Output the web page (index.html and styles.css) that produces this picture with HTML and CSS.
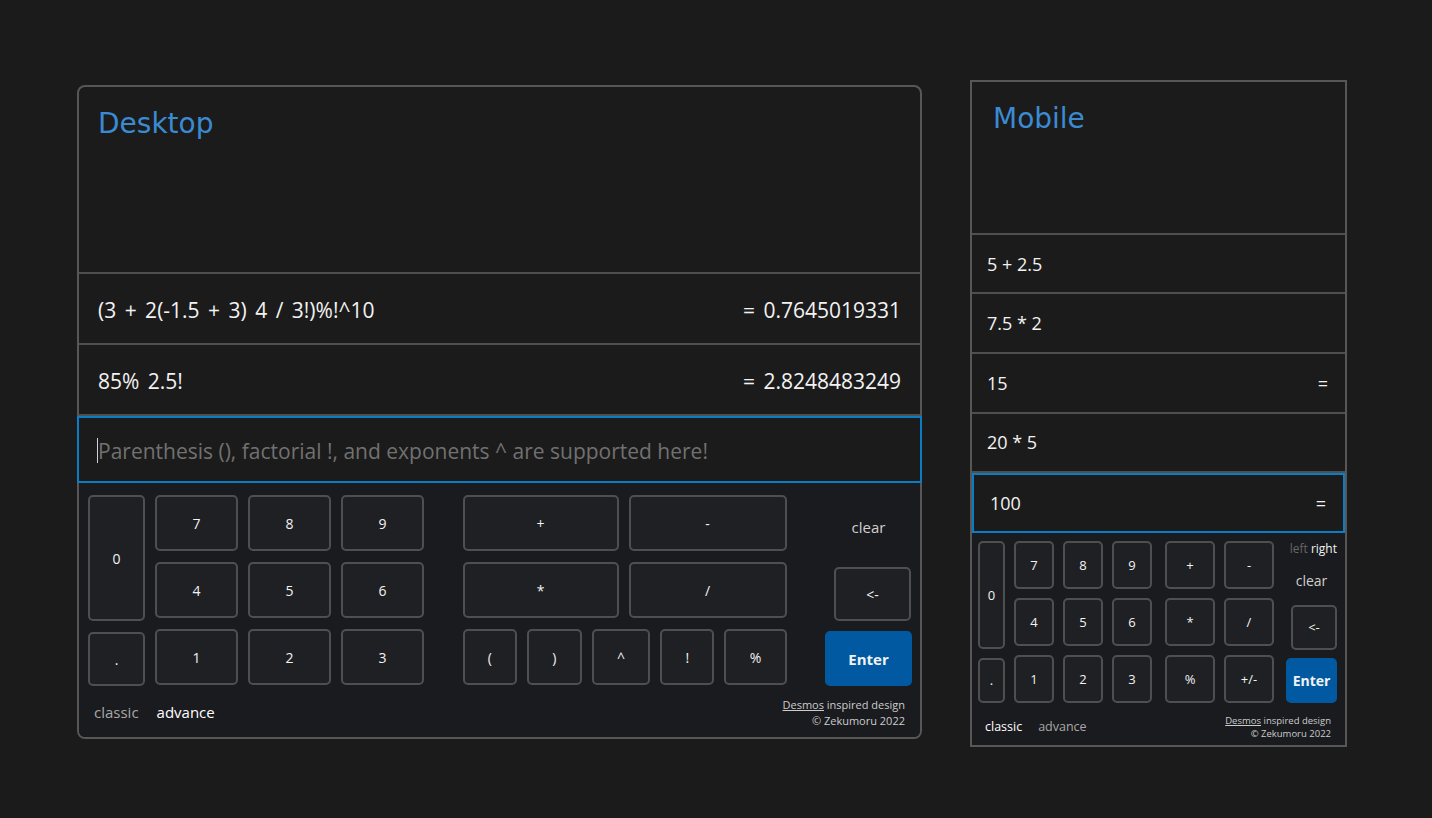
FILE: index.html
```html
<!DOCTYPE html>
<html lang="en">
<head>
<meta charset="utf-8">
<title>Calculator</title>
<link rel="stylesheet" href="styles.css">
</head>
<body>
<div class="stage">
  <section class="calc desktop">
    <header class="calc-head"><h1 class="title">Desktop</h1></header>
    <div class="row"><span>(3 + 2(-1.5 + 3) 4 / 3!)%!^10</span><span>= 0.7645019331</span></div>
    <div class="row"><span>85% 2.5!</span><span>= 2.8248483249</span></div>
    <div class="input"><span class="caret"></span><span class="placeholder">Parenthesis (), factorial !, and exponents ^ are supported here!</span></div>
    <div class="keypad">
      <div class="keys">
        <div class="numpad">
          <div class="leftcol">
            <button class="key zero">0</button>
            <button class="key dot">.</button>
          </div>
          <div class="numgrid">
            <button class="key">7</button><button class="key">8</button><button class="key">9</button>
            <button class="key">4</button><button class="key">5</button><button class="key">6</button>
            <button class="key">1</button><button class="key">2</button><button class="key">3</button>
          </div>
        </div>
        <div class="ops">
          <div class="opgrid">
            <button class="key op">+</button><button class="key op">-</button>
            <button class="key op">*</button><button class="key op">/</button>
          </div>
          <div class="oprow">
            <button class="key op">(</button><button class="key op">)</button><button class="key op">^</button><button class="key op">!</button><button class="key op">%</button>
          </div>
        </div>
        <div class="side">
          <div class="clear">clear</div>
          <button class="key back">&lt;-</button>
          <button class="key enter">Enter</button>
        </div>
      </div>
      <div class="foot">
        <div class="modes"><span class="mode">classic</span><span class="mode active">advance</span></div>
        <div class="credit"><div><a href="#">Desmos</a> inspired design</div><div>© Zekumoru 2022</div></div>
      </div>
    </div>
  </section>

  <section class="calc mobile">
    <header class="calc-head"><h1 class="title">Mobile</h1></header>
    <div class="row"><span>5 + 2.5</span></div>
    <div class="row"><span>7.5 * 2</span></div>
    <div class="row"><span>15</span><span>=</span></div>
    <div class="row"><span>20 * 5</span></div>
    <div class="input"><span class="value">100</span><span>=</span></div>
    <div class="keypad">
      <div class="keys">
        <div class="numpad">
          <div class="leftcol">
            <button class="key zero">0</button>
            <button class="key dot">.</button>
          </div>
          <div class="numgrid">
            <button class="key">7</button><button class="key">8</button><button class="key">9</button>
            <button class="key">4</button><button class="key">5</button><button class="key">6</button>
            <button class="key">1</button><button class="key">2</button><button class="key">3</button>
          </div>
        </div>
        <div class="opgrid">
          <button class="key op">+</button><button class="key op">-</button>
          <button class="key op">*</button><button class="key op">/</button>
          <button class="key op">%</button><button class="key op">+/-</button>
        </div>
        <div class="side">
          <div class="hand"><span class="dim">left</span> <span>right</span></div>
          <div class="clear">clear</div>
          <button class="key back">&lt;-</button>
          <button class="key enter">Enter</button>
        </div>
      </div>
      <div class="foot">
        <div class="modes"><span class="mode active">classic</span><span class="mode">advance</span></div>
        <div class="credit"><div><a href="#">Desmos</a> inspired design</div><div>© Zekumoru 2022</div></div>
      </div>
    </div>
  </section>
</div>
</body>
</html>
```

FILE: styles.css
```css
* { box-sizing: border-box; }
html, body { margin: 0; padding: 0; background: #1b1b1b; }
body {
  font-family: "Open Sans", "Noto Sans", sans-serif;
  color: #f2f2f2;
}
.stage {
  height: 818px;
  padding-left: 77px;
  display: flex;
  align-items: flex-start;
  gap: 48px;
}
.calc {
  background: #1b1b1b;
  border: 2px solid #575757;
  display: flex;
  flex-direction: column;
  flex: none;
}
.calc-head { border-bottom: 2px solid #4f4f4f; }
.title {
  margin: 0;
  font-family: "DejaVu Sans", Verdana, sans-serif;
  font-weight: normal;
  color: #3a8bd3;
  font-size: 28px;
  line-height: 1;
}
.row {
  display: flex;
  justify-content: space-between;
  align-items: center;
  border-bottom: 2px solid #4f4f4f;
}
.input {
  display: flex;
  align-items: center;
  border: 2px solid #0b7cc6;
}
.key {
  font-family: inherit;
  color: #f2f2f2;
  background: #1f2023;
  border: 2px solid #4f4f4f;
  border-radius: 5px;
  padding: 0;
  margin: 0;
}
.key.enter {
  background: #0059a1;
  border-color: #0059a1;
  font-weight: bold;
}
.keypad { background: #1a1b1e; display: flex; flex-direction: column; }
.keys { display: flex; justify-content: space-between; }
.numpad { display: flex; }
.leftcol { display: flex; flex-direction: column; }
.numgrid { display: grid; }
.side { display: flex; flex-direction: column; }
.clear { display: flex; align-items: center; justify-content: center; color: #cfcfcf; }
.back { align-self: flex-end; }
.foot { display: flex; justify-content: space-between; align-items: flex-end; }
.modes { display: flex; }
.mode { color: #a8a8a8; }
.mode.active { color: #ffffff; }
.credit { text-align: right; color: #cccccc; }
.credit a { color: #cccccc; text-decoration: underline; }

/* Desktop */
.desktop { width: 845px; height: 654px; margin-top: 85px; border-radius: 8px; }
.desktop .calc-head { height: 187px; padding: 23px 0 0 19px; border-top-left-radius: 6px; border-top-right-radius: 6px; }
.desktop .row { height: 71px; padding: 3px 19px 0 19px; font-size: 21px; word-spacing: 3px; }
.desktop .row:nth-of-type(3) { height: 70px; border-bottom: none; }
.desktop .input { height: 68px; margin: 0 -2px; padding: 3px 18px 0 18px; font-size: 21px; }
.desktop .caret { width: 1px; height: 25px; background: #d0d0d0; }
.desktop .placeholder { color: #717171; }
.desktop .keypad { padding: 12px 8px 0 9px; height: 254px; border-radius: 0 0 6px 6px; }
.desktop .key { font-size: 14px; }
.desktop .numpad { gap: 10px; width: 336px; }
.desktop .leftcol { width: 57px; gap: 11px; }
.desktop .zero { height: 126px; }
.desktop .dot { height: 54px; }
.desktop .numgrid { grid-template-columns: repeat(3, 83px); grid-auto-rows: 56px; column-gap: 10px; row-gap: 11px; }
.desktop .ops { width: 324px; display: flex; flex-direction: column; gap: 11px; }
.desktop .opgrid { display: grid; grid-template-columns: 156px 158px; grid-auto-rows: 56px; gap: 11px 10px; }
.desktop .oprow { display: flex; gap: 10px; height: 56px; }
.desktop .oprow .key { flex: 1 1 auto; }
.desktop .side { width: 87px; }
.desktop .clear { height: 64px; font-size: 15px; margin-bottom: 8px; }
.desktop .back { width: 77px; height: 54px; margin-right: 1px; margin-bottom: 10px; }
.desktop .enter { height: 55px; font-size: 15px; }
.desktop .foot { padding: 11px 7px 0 6px; }
.desktop .modes { gap: 18px; font-size: 15px; margin-bottom: 7px; }
.desktop .credit { font-size: 11px; line-height: 16px; }

/* Mobile */
.mobile { width: 377px; height: 667px; margin-top: 80px; }
.mobile .calc-head { height: 153px; padding: 23px 0 0 21px; }
.mobile .row { height: 60px; padding: 0 17px 0 15px; font-size: 18px; }
.mobile .row:nth-of-type(4) { height: 59px; }
.mobile .row:nth-of-type(5) { height: 58px; border-bottom: none; }
.mobile .input { height: 60px; padding: 0 17px 0 16px; font-size: 18px; justify-content: space-between; }
.mobile .keypad { padding: 8px 8px 0 6px; height: 213px; }
.mobile .key { font-size: 13px; }
.mobile .numpad { gap: 9px; width: 175px; }
.mobile .leftcol { width: 27px; gap: 9px; }
.mobile .zero { height: 108px; }
.mobile .dot { height: 45px; }
.mobile .numgrid { grid-template-columns: repeat(3, 40px); grid-auto-rows: 48px; gap: 9px; }
.mobile .opgrid { display: grid; width: 109px; grid-template-columns: 50px 50px; grid-auto-rows: 48px; gap: 9px; }
.mobile .side { width: 51px; }
.mobile .hand { height: 16px; font-size: 12px; line-height: 16px; text-align: right; }
.mobile .hand .dim { color: #666; }
.mobile .clear { height: 48px; font-size: 14px; }
.mobile .back { width: 46px; height: 45px; margin-bottom: 8px; }
.mobile .enter { height: 45px; font-size: 14px; }
.mobile .foot { padding: 11px 6px 0 7px; }
.mobile .modes { gap: 16px; font-size: 12.5px; margin-bottom: 5px; }
.mobile .credit { font-size: 9.5px; line-height: 13px; }
```
